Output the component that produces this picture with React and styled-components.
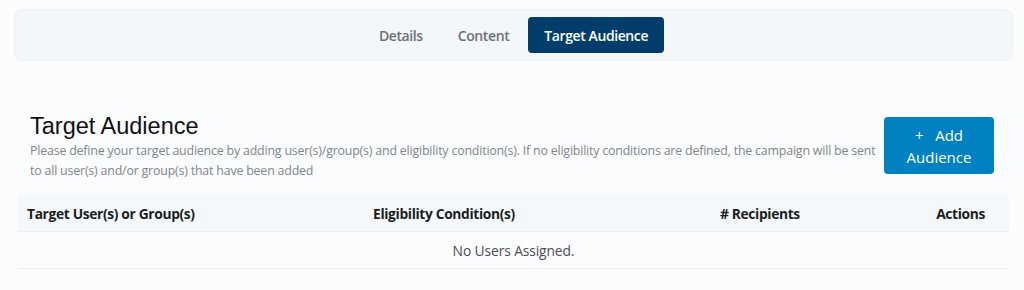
import React from "react";
import styled, { createGlobalStyle } from "styled-components";

const GlobalStyle = createGlobalStyle`
  html, body {
    margin: 0;
    padding: 0;
    background: #fbfcfd;
  }
  body {
    font-family: "Open Sans", "Noto Sans", sans-serif;
    color: #212529;
  }
`;

const Page = styled.div`
  padding: 9px 11px 0 14px;
`;

const TabBar = styled.div`
  height: 52px;
  display: flex;
  justify-content: center;
  align-items: center;
  gap: 3px;
  background: #f3f7fa;
  border: 1px solid #eef2f5;
  border-radius: 8px;
  box-sizing: border-box;
`;

const Tab = styled.button`
  height: 36px;
  padding: 0 16px;
  border: none;
  border-radius: 4px;
  font-family: inherit;
  font-size: 14px;
  font-weight: 600;
  letter-spacing: -0.4px;
  cursor: pointer;
  background: ${props => (props.active ? "#003d6b" : "transparent")};
  color: ${props => (props.active ? "#ffffff" : "#6b7178")};
`;

const Section = styled.div`
  margin: 50px 0 0 4px;
  width: 991px;
`;

const Header = styled.div`
  display: flex;
  align-items: flex-start;
  justify-content: space-between;
  gap: 3px;
  padding: 0 15px 0 12px;
`;

const HeaderText = styled.div`
  flex: 1;
`;

const Title = styled.h2`
  margin: 0;
  font-family: "Liberation Sans", Arial, sans-serif;
  font-weight: 400;
  font-size: 23.5px;
  line-height: 30px;
  color: #111;
`;

const Description = styled.p`
  margin: 0;
  font-size: 12.4px;
  line-height: 20px;
  color: #80858a;
  letter-spacing: -0.19px;
`;

const AddButton = styled.button`
  flex: none;
  width: 110px;
  height: 57px;
  margin-top: 6px;
  border: none;
  border-radius: 4px;
  background: #0081c2;
  color: #fff;
  font-family: inherit;
  font-size: 15px;
  line-height: 22px;
  cursor: pointer;
  padding: 4px 10px;
`;

const Table = styled.div`
  margin-top: 14px;
`;

const Row = styled.div`
  display: grid;
  grid-template-columns: 346px 347px 1fr 120px;
  align-items: center;
  height: 36px;
  border-bottom: 1px solid #e9edf0;
  background: ${props => (props.head ? "#f4f8fb" : "transparent")};
`;

const HeadCell = styled.div`
  padding: 0 ${props => (props.right ? "24px" : "9px")};
  font-size: 13.8px;
  font-weight: 700;
  letter-spacing: -0.35px;
  color: #1b1e21;
  text-align: ${props => (props.right ? "right" : "left")};
`;

const EmptyCell = styled.div`
  grid-column: 1 / -1;
  text-align: center;
  font-size: 13.8px;
  color: #4a4f54;
  letter-spacing: -0.1px;
`;

export default function App() {
  return (
    <>
      <GlobalStyle />
      <Page>
        <TabBar>
          <Tab>Details</Tab>
          <Tab>Content</Tab>
          <Tab active>Target Audience</Tab>
        </TabBar>
        <Section>
          <Header>
            <HeaderText>
              <Title>Target Audience</Title>
              <Description>
                Please define your target audience by adding user(s)/group(s)
                and eligibility condition(s). If no eligibility conditions are
                defined, the campaign will be sent to all user(s) and/or
                group(s) that have been added
              </Description>
            </HeaderText>
            <AddButton>{"+\u00a0\u00a0 Add Audience"}</AddButton>
          </Header>
          <Table>
            <Row head>
              <HeadCell>Target User(s) or Group(s)</HeadCell>
              <HeadCell>Eligibility Condition(s)</HeadCell>
              <HeadCell># Recipients</HeadCell>
              <HeadCell right>Actions</HeadCell>
            </Row>
            <Row>
              <EmptyCell>No Users Assigned.</EmptyCell>
            </Row>
          </Table>
        </Section>
      </Page>
    </>
  );
}
